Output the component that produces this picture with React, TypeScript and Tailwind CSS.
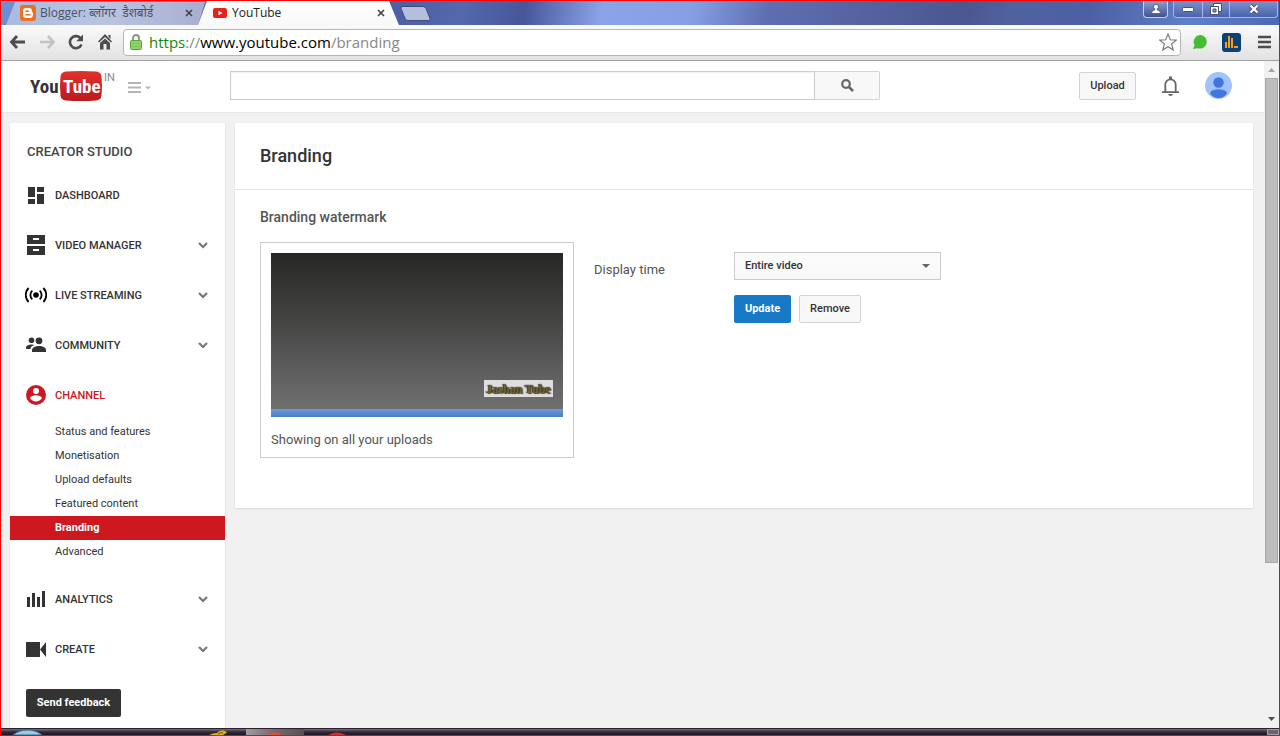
import { useState } from "react";

type IconName = "dashboard" | "video" | "live" | "community" | "channel" | "analytics" | "create";

const navItems: { icon: IconName; label: string; expandable?: boolean; children?: string[] }[] = [
  { icon: "dashboard", label: "DASHBOARD" },
  { icon: "video", label: "VIDEO MANAGER", expandable: true },
  { icon: "live", label: "LIVE STREAMING", expandable: true },
  { icon: "community", label: "COMMUNITY", expandable: true },
  {
    icon: "channel",
    label: "CHANNEL",
    children: [
      "Status and features",
      "Monetisation",
      "Upload defaults",
      "Featured content",
      "Branding",
      "Advanced",
    ],
  },
  { icon: "analytics", label: "ANALYTICS", expandable: true },
  { icon: "create", label: "CREATE", expandable: true },
];

function NavIcon({ name }: { name: IconName }) {
  return (
    <svg width="22" height="22" viewBox="0 0 22 22" className="shrink-0" aria-hidden="true">
      {name === "dashboard" && (
        <path fill="#333" d="M3 3h7v10H3zM12 3h7v5h-7zM3 15h7v5H3zM12 10h7v10h-7z" />
      )}
      {name === "video" && (
        <path
          fill="#333"
          fillRule="evenodd"
          d="M2 1h18v9H2zM8 4v2h6V4zM2 12h18v9H2zM8 15v2h6v-2z"
        />
      )}
      {name === "live" && (
        <g fill="none" stroke="#000" strokeWidth="1.8">
          <circle cx="11" cy="11" r="2.8" fill="#000" stroke="none" />
          <path d="M7.300 6.600a6 6 0 0 0 0 8.800M14.700 6.600a6 6 0 0 1 0 8.800M3.600 4a10 10 0 0 0 0 14M18.400 4a10 10 0 0 1 0 14" />
        </g>
      )}
      {name === "community" && (
        <g fill="#333">
          <circle cx="6.5" cy="6.3" r="2.8" />
          <circle cx="14" cy="6.8" r="3.4" />
          <path d="M1 15v-1.500c0-2 3-3 5.500-3 1.200 0 2.200.2 3 .5-2.500.9-4 2-4 4z" />
          <path d="M7 18v-2c0-2.600 4-4 7-4s7 1.400 7 4v2z" />
        </g>
      )}
      {name === "channel" && (
        <g>
          <circle cx="11" cy="11" r="10" fill="#cc181e" />
          <circle cx="11" cy="7" r="3" fill="#fff" />
          <path fill="#fff" d="M5 14.300c0-2 4-3.100 6-3.100s6 1.100 6 3.100c-1.300 2-3.500 3.200-6 3.200s-4.700-1.200-6-3.200z" />
        </g>
      )}
      {name === "analytics" && <path fill="#333" d="M2 9h3v10H2zM7 5h3v14H7zM12 9h3v10h-3zM17 3h3v16h-3z" />}
      {name === "create" && <path fill="#333" d="M1 4h14v15H1zM21 4v15l-6-7.500z" />}
    </svg>
  );
}

function Chevron() {
  return (
    <svg width="10" height="7" viewBox="0 0 10 7" className="ml-auto" aria-hidden="true">
      <path d="M1 1l4 4 4-4" fill="none" stroke="#777" strokeWidth="2.2" />
    </svg>
  );
}

function TabClose({ label }: { label: string }) {
  return (
    <button type="button" aria-label={label} className="ml-auto">
      <svg width="8" height="8" viewBox="0 0 8 8">
        <path d="M1 1l6 6M7 1l-6 6" stroke="#444" strokeWidth="1.7" />
      </svg>
    </button>
  );
}

function TabStrip() {
  return (
    <div className="flex h-6 items-stretch bg-[linear-gradient(100deg,#6f8fd0_0%,#4a5a9c_28%,#5468ac_36%,#48569a_41%,#8ba3e8_47%,#869fe4_54%,#5e6eb0_60%,#4a5790_75%,#4f629f_79%,#4d5fa4_85%,#5f80c8_93%,#4d68b4_100%)]">
      <div className="ml-[5px] flex w-[199px] items-center bg-[linear-gradient(90deg,#a9bbe0,#bac4e2_50%,#a9aed0)] pr-3 pl-[14px] font-['Open_Sans','Noto_Sans',sans-serif] text-xs text-[#4b5264] [clip-path:polygon(9px_1px,100%_1px,192px_100%,0_100%)]">
        <svg width="16" height="16" viewBox="0 0 16 16" className="mr-1 shrink-0" aria-hidden="true">
          <rect width="16" height="16" rx="3" fill="#ee6f1f" />
          <path
            fill="#fff"
            fillRule="evenodd"
            d="M6 3h3a3 3 0 0 1 3 3v.6q0 .6.500.6.500.1.500.700V9.500A3.500 3.500 0 0 1 9.500 13h-3.500A3 3 0 0 1 3 10V6a3 3 0 0 1 3-3zM6 5.500q-.8 0-.8.8t.8.700h2.500q.8 0 .8-.7T8.500 5.500zM6 9q-.8 0-.8.8t.8.700h4q.8 0 .8-.7T10 9z"
          />
        </svg>
        <span className="whitespace-nowrap">Blogger: ब्लॉगर&nbsp; डैशबोर्ड</span>
        <TabClose label="Close Blogger tab" />
      </div>
      <div className="-ml-[7px] flex w-[201px] items-center bg-gradient-to-b from-white to-[#f8f8f8] pr-[14px] pl-[15px] font-['Open_Sans','Noto_Sans',sans-serif] text-xs text-[#222] [clip-path:polygon(9px_0,191px_0,100%_100%,0_100%)]">
        <svg width="14" height="10" viewBox="0 0 14 10" className="mr-[5px] shrink-0" aria-hidden="true">
          <rect width="14" height="10" rx="2" fill="#e62117" />
          <path d="M5.500 2.700v4.600L9.500 5z" fill="#fff" />
        </svg>
        <span>YouTube</span>
        <TabClose label="Close YouTube tab" />
      </div>
      <button type="button" aria-label="New tab" className="self-center">
        <svg width="32" height="15" viewBox="0 0 32 15">
          <path d="M3 .5h21q2 0 3 2l4 10q.5 2-1.500 2H9q-2 0-3-2L2 2.500Q1.500.5 3 .5z" fill="#b3bfdc" stroke="#3c4a80" />
        </svg>
      </button>
      <div className="mr-[1px] ml-auto flex h-[17px] gap-[5px]">
        <button
          type="button"
          aria-label="Profile"
          className="flex w-[25px] items-center justify-center rounded-b border border-t-0 border-[#c8d0ea] bg-gradient-to-b from-[#8fa0cc] to-[#40538f]"
        >
          <svg width="12" height="12" viewBox="0 0 12 12">
            <path d="M6 1.500a2.200 2.200 0 0 1 1.200 4.200V7q3.300.2 3.300 3.500h-9Q1.500 7.200 4.800 7V5.700A2.200 2.200 0 0 1 6 1.500z" fill="#fff" stroke="#39435f" strokeWidth=".7" />
          </svg>
        </button>
        <div className="flex w-[105px] rounded-b border border-t-0 border-[#a9b7e2] bg-gradient-to-b from-[#7d92ce] to-[#4963ad]">
          <button type="button" aria-label="Minimise" className="flex w-[29px] items-center justify-center border-r border-[#a9b7e2]">
            <svg width="12" height="5" viewBox="0 0 12 5">
              <rect x=".5" y=".5" width="11" height="4" rx="1" fill="#fff" stroke="#48506a" />
            </svg>
          </button>
          <button type="button" aria-label="Restore" className="flex w-[27px] items-center justify-center border-r border-[#a9b7e2]">
            <svg width="12" height="12" viewBox="0 0 12 12">
              <path d="M3.500.5h8v8h-8z" fill="#fff" stroke="#48506a" />
              <path d="M.5 3.500h8v8h-8z" fill="#fff" stroke="#48506a" />
              <path d="M3 6h3v3H3z" fill="#7d92ce" stroke="#48506a" />
            </svg>
          </button>
          <button type="button" aria-label="Close window" className="flex flex-1 items-center justify-center">
            <svg width="12" height="10" viewBox="0 0 12 10">
              <path d="M2.500 1.500l7 7M9.500 1.500l-7 7" stroke="#48506a" strokeWidth="4" />
              <path d="M2.500 1.500l7 7M9.500 1.500l-7 7" stroke="#fff" strokeWidth="2.3" />
            </svg>
          </button>
        </div>
      </div>
    </div>
  );
}

function Toolbar() {
  return (
    <div className="flex h-9 items-center border-b border-[#a3a3a3] bg-gradient-to-b from-[#fafafa] to-[#e2e2e2] px-2 pb-px">
      <button type="button" aria-label="Back">
        <svg width="18" height="16" viewBox="0 0 18 16">
          <path d="M8 2L2.500 8 8 14M3 8h13" fill="none" stroke="#4d4d4d" strokeWidth="2.8" />
        </svg>
      </button>
      <button type="button" aria-label="Forward" className="ml-[11px]">
        <svg width="18" height="16" viewBox="0 0 18 16">
          <path d="M10 2l5.500 6-5.500 6M15 8H2" fill="none" stroke="#c3c3c3" strokeWidth="2.6" />
        </svg>
      </button>
      <button type="button" aria-label="Reload" className="ml-3">
        <svg width="16" height="16" viewBox="0 0 16 16">
          <path d="M13.500 10.500A6 6 0 1 1 12.300 4" fill="none" stroke="#4d4d4d" strokeWidth="2.6" />
          <path d="M15 .5v6.700H8.300z" fill="#4d4d4d" />
        </svg>
      </button>
      <button type="button" aria-label="Home" className="ml-[14px]">
        <svg width="14" height="16" viewBox="0 0 14 16">
          <path d="M7 0l7 7.500-1 1L7 3 1 8.500l-1-1zM10.500 1h2v4l-2-2zM2 9l5-4.600L12 9v6.500H8.500V10h-3v5.500H2z" fill="#4d4d4d" />
        </svg>
      </button>
      <div className="ml-[11px] flex h-[27px] flex-1 items-center rounded-sm border border-[#b5b5b5] bg-white px-[6px]">
        <svg width="12" height="16" viewBox="0 0 12 16" className="mr-[7px] shrink-0" aria-hidden="true">
          <path d="M3 7V4a3 3 0 0 1 6 0v3" fill="none" stroke="#8c8c8c" strokeWidth="1.8" />
          <rect x=".5" y="6.5" width="11" height="9" rx="1" fill="#8fd468" stroke="#5aa436" />
          <path d="M2 9.500h8M2 12.500h8" stroke="#7cc455" />
        </svg>
        <p className="font-['Open_Sans','Noto_Sans',sans-serif] text-[15px] leading-6 text-[#888]">
          <span className="text-[#0b8a0b]">https</span>://<span className="text-black">www.youtube.com</span>/branding
        </p>
        <button type="button" aria-label="Bookmark this page" className="-mr-[3px] ml-auto">
          <svg width="18" height="18" viewBox="0 0 18 18">
            <path d="M9 1l2.300 5.700 6 .4-4.700 3.900 1.600 6L9 13.700 3.800 17l1.600-6L.7 7.100l6-.4z" fill="#fff" stroke="#777" strokeWidth="1.1" />
          </svg>
        </button>
      </div>
      <button type="button" aria-label="Chat extension" className="ml-[11px]">
        <svg width="16" height="16" viewBox="0 0 16 16">
          <path d="M8.500 1a6.800 6.800 0 1 1-2.800 13.200L1 15l1.600-3.800A6.800 6.800 0 0 1 8.500 1z" fill="#43bd35" />
        </svg>
      </button>
      <button type="button" aria-label="Statistics extension" className="ml-[14px]">
        <svg width="19" height="19" viewBox="0 0 19 19">
          <rect width="19" height="19" rx="3" fill="#08427c" />
          <path d="M3 9h2v6H3zM6 3h2v12H6zM9 5h2v10H9zM12 13h4v2h-4z" fill="#ff9a0a" />
        </svg>
      </button>
      <button type="button" aria-label="Menu" className="ml-[17px]">
        <svg width="13" height="14" viewBox="0 0 13 14">
          <path d="M0 2h13M0 7h13M0 12h13" stroke="#4d4d4d" strokeWidth="2.6" />
        </svg>
      </button>
    </div>
  );
}

function Masthead() {
  return (
    <header className="flex h-[52px] items-center border-b border-[#e8e8e8] bg-white pr-8 pb-[2px] pl-[29px]">
      <div className="flex w-[200px] shrink-0 items-center">
        <a href="#home" aria-label="YouTube home" className="flex">
          <svg width="73" height="32" viewBox="0 0 73 32">
            <defs>
              <linearGradient id="tube" x1="0" y1="0" x2="0" y2="1">
                <stop offset="0" stopColor="#e1322c" />
                <stop offset="1" stopColor="#bb1a1d" />
              </linearGradient>
            </defs>
            <path d="M36 1.500q15-1 30 0 5 .5 5.500 5 1 9.500 0 19-.5 4.500-5.500 5-15 1-30 0-5-.5-5.500-5-1-9.500 0-19 .5-4.500 5.500-5z" fill="url(#tube)" />
            <text x="0" y="23" fill="#333" fontSize="19" fontWeight="700" fontFamily="'Roboto Condensed','Liberation Sans Narrow',sans-serif">You</text>
            <text x="33" y="23" fill="#fff" fontSize="19" fontWeight="700" fontFamily="'Roboto Condensed','Liberation Sans Narrow',sans-serif">Tube</text>
          </svg>
        </a>
        <span className="ml-[1px] self-start text-[11px] leading-4 text-[#888]">IN</span>
        <button type="button" aria-label="Guide" className="ml-[13px] pt-[2px]">
          <svg width="24" height="12" viewBox="0 0 24 12">
            <path d="M0 2h13M0 6.500h13M0 11h13" stroke="#b5b5b5" strokeWidth="2" />
            <path d="M17 5.500h6l-3 3z" fill="#b5b5b5" />
          </svg>
        </button>
      </div>
      <form className="flex h-[29px] max-w-[650px] flex-1" onSubmit={(e) => e.preventDefault()}>
        <input
          type="text"
          aria-label="Search"
          className="min-w-0 flex-1 border border-[#ccc] bg-white px-2 text-sm shadow-[inset_0_1px_2px_#eee] outline-none"
        />
        <button
          type="submit"
          aria-label="Search YouTube"
          className="flex w-[65px] items-center justify-center rounded-r-xs border border-l-0 border-[#d3d3d3] bg-[#f8f8f8]"
        >
          <svg width="13" height="13" viewBox="0 0 13 13">
            <circle cx="5" cy="5" r="3.8" fill="none" stroke="#666" strokeWidth="2.2" />
            <path d="M7.800 7.800l4.200 4.200" stroke="#666" strokeWidth="2.6" />
          </svg>
        </button>
      </form>
      <div className="ml-auto flex items-center">
        <button type="button" className="h-7 w-[57px] rounded-xs border border-[#d3d3d3] bg-[#f8f8f8] pt-px text-[11px] font-medium text-[#333]">
          Upload
        </button>
        <button type="button" aria-label="Notifications" className="ml-[26px]">
          <svg width="17" height="20" viewBox="0 0 17 20">
            <path d="M3.300 16V8.500a5.200 5.200 0 0 1 10.400 0V16" fill="none" stroke="#666" strokeWidth="1.8" />
            <path d="M0 15.200h17v1.800H0zM7 .5h3V4H7zM6 18h5q-.5 2-2.500 2T6 18z" fill="#666" />
          </svg>
        </button>
        <button type="button" aria-label="Account" className="ml-[26px]">
          <svg width="27" height="27" viewBox="0 0 27 27">
            <clipPath id="avatar">
              <circle cx="13.5" cy="13.5" r="13.5" />
            </clipPath>
            <g clipPath="url(#avatar)">
              <rect width="27" height="27" fill="#a1c2fa" />
              <circle cx="13.5" cy="10.5" r="5.2" fill="#4175df" />
              <path d="M5 21.500q0-3.700 8.500-4.300 8.500.6 8.500 4.300-3.500 4.500-8.500 4.500T5 21.500z" fill="#4175df" />
            </g>
          </svg>
        </button>
      </div>
    </header>
  );
}

function Sidebar() {
  return (
    <nav className="w-[215px] shrink-0 bg-white pt-[19px] pb-[11px] shadow-[0_1px_2px_rgba(0,0,0,0.1)]">
      <h2 className="mb-2 pl-[17px] text-[13px] leading-5 font-medium text-[#444]">CREATOR STUDIO</h2>
      <ul>
        {navItems.map((item) => (
          <li key={item.label}>
            <a href="#section" className="flex h-[50px] items-center pr-[17px] pl-[15px] text-[11px] leading-4 font-medium">
              <NavIcon name={item.icon} />
              <span className={item.children ? "ml-2 pt-px text-[#cc181e]" : "ml-2 pt-px text-[#333]"}>
                {item.label}
              </span>
              {item.expandable && <Chevron />}
            </a>
            {item.children && (
              <ul className="mb-[10px]">
                {item.children.map((child) => (
                  <li key={child}>
                    <a
                      href="#page"
                      className={
                        child === "Branding"
                          ? "block bg-[#cc181e] pl-[45px] text-[11px] leading-6 font-bold text-white"
                          : "block pl-[45px] text-[11px] leading-6 text-[#333]"
                      }
                    >
                      {child}
                    </a>
                  </li>
                ))}
              </ul>
            )}
          </li>
        ))}
      </ul>
      <button type="button" className="mt-[15px] ml-4 h-7 w-[95px] rounded-xs bg-[#333] pt-px text-[11px] font-bold text-white">
        Send feedback
      </button>
    </nav>
  );
}

function BrandingPanel() {
  const [displayTime, setDisplayTime] = useState("entire");

  return (
    <main className="min-w-0 flex-1 self-start bg-white pb-[50px] shadow-[0_1px_2px_rgba(0,0,0,0.1)]">
      <div className="border-b border-[#e2e2e2] px-[25px] py-[21px]">
        <h1 className="text-lg leading-6 font-medium text-[#333]">Branding</h1>
      </div>
      <div className="px-[25px] pt-[17px]">
        <h2 className="mb-[15px] text-sm leading-5 font-medium text-[#555]">Branding watermark</h2>
        <div className="flex items-start gap-5">
          <div className="w-[314px] border border-[#ccc] px-[10px] pt-[10px] pb-[7px]">
            <div className="flex h-[164px] flex-col bg-gradient-to-b from-[#272725] to-[#737574]">
              <div className="mt-auto mr-[10px] mb-3 flex h-[17px] w-[69px] items-center justify-center self-end bg-[#dedede]">
                <span className="font-['Liberation_Serif',serif] text-xs leading-4 font-bold whitespace-nowrap text-[#6d6636] [text-shadow:0_0_1px_#3a2e1c,1px_1px_1px_#3a2e1c,-1px_0_1px_#3a2e1c]">
                  Jashan Tube
                </span>
              </div>
              <div className="h-2 bg-gradient-to-b from-[#6a99d6] to-[#4a7fc4]" />
            </div>
            <p className="mt-[13px] text-[13px] leading-5 text-[#555]">Showing on all your uploads</p>
          </div>
          <label htmlFor="display-time" className="w-[120px] pt-[18px] text-[13px] leading-5 text-[#555]">
            Display time
          </label>
          <div className="pt-[10px]">
            <div className="grid h-7 w-[207px] items-center">
              <select
                id="display-time"
                value={displayTime}
                onChange={(e) => setDisplayTime(e.target.value)}
                className="col-start-1 row-start-1 h-7 appearance-none border border-[#ccc] bg-gradient-to-b from-[#fcfcfc] to-[#f8f8f8] px-[10px] text-[11px] font-medium text-[#333] outline-none"
              >
                <option value="entire">Entire video</option>
                <option value="end">End of video</option>
                <option value="custom">Custom start time</option>
              </select>
              <svg width="8" height="4" viewBox="0 0 8 4" className="pointer-events-none col-start-1 row-start-1 mr-[11px] justify-self-end" aria-hidden="true">
                <path d="M0 0h8L4 4z" fill="#666" />
              </svg>
            </div>
            <div className="mt-[15px] flex gap-2">
              <button type="button" className="h-7 w-[57px] rounded-xs bg-[#167ac6] pt-px text-[11px] font-bold text-white">
                Update
              </button>
              <button type="button" className="h-7 w-[62px] rounded-xs border border-[#d3d3d3] bg-[#f8f8f8] pt-px text-[11px] font-medium text-[#333]">
                Remove
              </button>
            </div>
          </div>
        </div>
      </div>
    </main>
  );
}

function Scrollbar() {
  return (
    <div className="flex w-[15px] shrink-0 flex-col items-center bg-[#f1f1f1]" aria-hidden="true">
      <svg width="15" height="17" viewBox="0 0 15 17">
        <path d="M4 11h7L7.500 7z" fill="#a3a3a3" />
      </svg>
      <div className="w-[13px] flex-[485] border border-[#a8a8a8] bg-[#bcbcbc]" />
      <div className="flex-[148]" />
      <svg width="15" height="17" viewBox="0 0 15 17">
        <path d="M4 6h7l-3.500 4z" fill="#505050" />
      </svg>
    </div>
  );
}

function Taskbar() {
  return (
    <div className="flex h-[7px] items-end border-t border-[#2a2230] bg-gradient-to-b from-[#77707c] via-[#33283a] to-[#1e1620]">
      <svg width="30" height="6" viewBox="0 0 30 6" className="ml-[11px]" aria-hidden="true">
        <path d="M1 6Q7 1 15.500 1T30 6z" fill="#a9c6d8" stroke="#2f6a94" />
      </svg>
      <svg width="18" height="5" viewBox="0 0 18 5" className="ml-[167px]" aria-hidden="true">
        <path d="M0 5q4-2 8-2 2-3 6-2.500 3 .5 4 2L14 5z" fill="#e0b414" />
        <path d="M9 4q3-2 5-1" fill="none" stroke="#5a4a08" />
      </svg>
      <div className="ml-[19px] flex h-full w-[58px] items-end justify-center bg-gradient-to-r from-[#a39ba0] via-[#76686c] to-[#5b5155]">
        <svg width="14" height="3" viewBox="0 0 14 3" aria-hidden="true">
          <path d="M0 3q7-5 14 0z" fill="#e2502e" />
        </svg>
      </div>
      <svg width="18" height="3" viewBox="0 0 18 3" className="ml-6" aria-hidden="true">
        <path d="M0 3q9-5 18 0z" fill="#d83030" />
      </svg>
      <div className="ml-auto h-[6px] w-3 border border-[#a5a0a6] bg-[#6a666b]" />
    </div>
  );
}

export default function App() {
  return (
    <div className="flex min-h-screen flex-col border border-[#f00] bg-[#f1f1f1] font-[Roboto,sans-serif]">
      <TabStrip />
      <Toolbar />
      <div className="flex flex-1">
        <div className="flex min-w-0 flex-1 flex-col">
          <Masthead />
          <div className="flex flex-1 gap-[10px] pt-[10px] pr-[11px] pl-[9px]">
            <Sidebar />
            <BrandingPanel />
          </div>
        </div>
        <Scrollbar />
      </div>
      <Taskbar />
    </div>
  );
}
